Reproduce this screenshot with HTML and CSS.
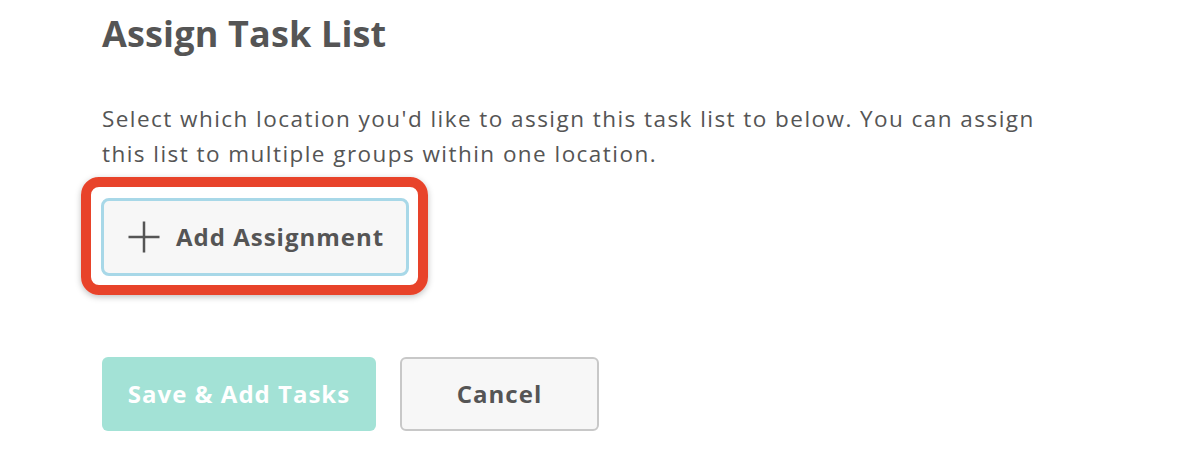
FILE: index.html
```html
<!DOCTYPE html>
<html>
<head>
<meta charset="utf-8">
<link rel="stylesheet" href="styles.css">
</head>
<body>
<div class="page">
  <h1 class="title">Assign Task List</h1>
  <p class="desc">Select which location you'd like to assign this task list to below. You can assign this list to multiple groups within one location.</p>
  <div class="highlight">
    <button class="add-btn">
      <svg class="plus" width="34" height="34" viewBox="0 0 34 34"><path d="M17 1.5V32.5M1.5 17H32.5" stroke="#555" stroke-width="2.5" fill="none"/></svg>
      <span>Add Assignment</span>
    </button>
  </div>
  <div class="actions">
    <button class="btn save">Save &amp; Add Tasks</button>
    <button class="btn cancel">Cancel</button>
  </div>
</div>
</body>
</html>
```
FILE: styles.css
```css
html, body { margin: 0; padding: 0; background: #fff; }
.page {
  padding: 12px 0 0 102px;
  font-family: "Open Sans", sans-serif;
  color: #555;
}
.title {
  margin: 0;
  font-size: 36px;
  font-weight: 700;
  line-height: 44px;
  color: #555;
  letter-spacing: 0.15px;
}
.desc {
  margin: 45px 0 0 0;
  width: 955px;
  font-size: 22.5px;
  line-height: 35px;
  letter-spacing: 1.45px;
  color: #555;
}
.highlight {
  margin: 6px 0 0 -21px;
  width: 347px;
  height: 118px;
  box-sizing: border-box;
  border: 10px solid #e8432a;
  border-radius: 18px;
  box-shadow: 0 2px 6px rgba(0,0,0,0.25);
  padding: 11px 0 0 10px;
}
.add-btn {
  width: 308px;
  height: 78px;
  box-sizing: border-box;
  border: 3px solid #a8d8e8;
  border-radius: 8px;
  background: #f7f7f7;
  display: flex;
  align-items: center;
  gap: 15px;
  padding: 0 0 1px 23px;
  font-family: inherit;
  font-size: 24px;
  font-weight: 700;
  letter-spacing: 1px;
  color: #555;
}
.plus { display: block; }
.actions {
  margin-top: 62px;
  display: flex;
  gap: 24px;
}
.btn {
  height: 74px;
  box-sizing: border-box;
  border-radius: 6px;
  font-family: inherit;
  font-size: 24px;
  font-weight: 700;
  letter-spacing: 1px;
  padding-bottom: 3px;
}
.save {
  width: 274px;
  background: #a3e2d6;
  border: none;
  color: #fff;
}
.cancel {
  width: 199px;
  background: #f7f7f7;
  border: 2px solid #c8c8c8;
  color: #555;
}
```
